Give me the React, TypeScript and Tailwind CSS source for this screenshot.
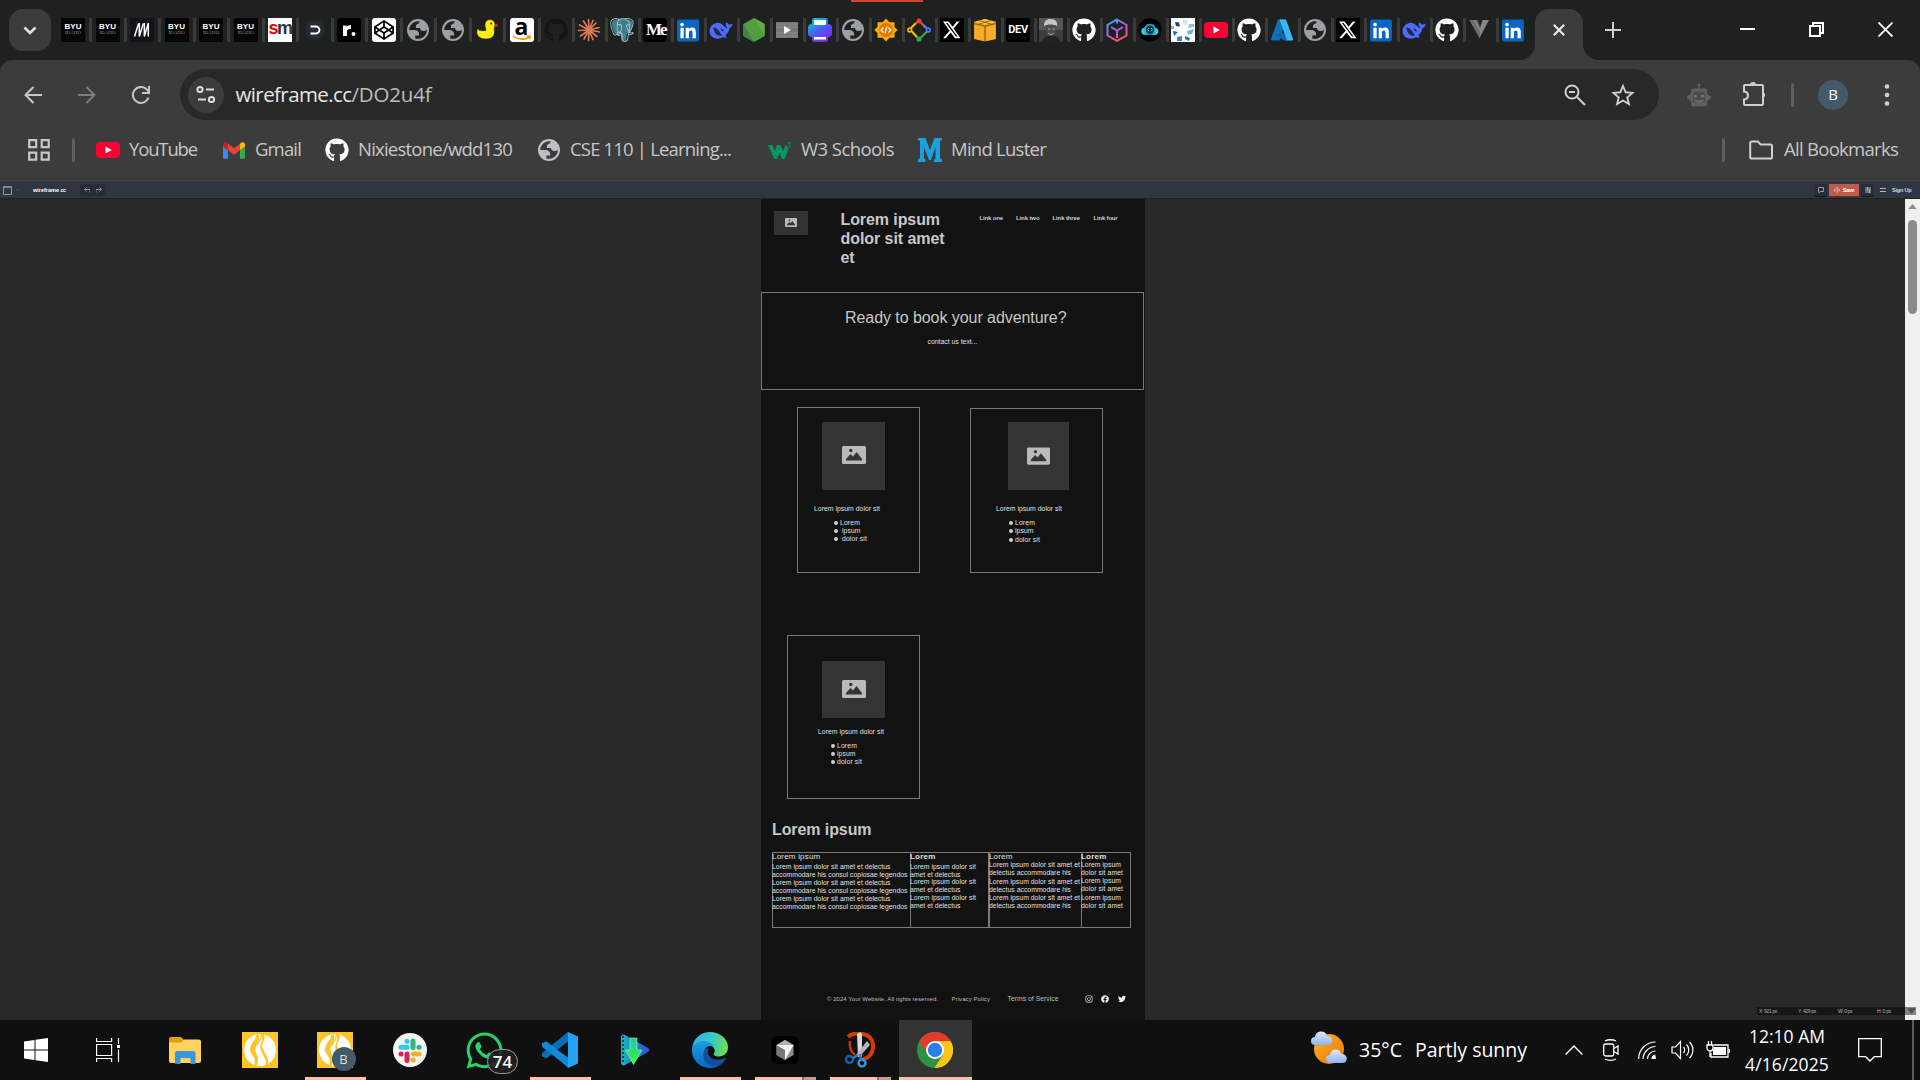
import React, { useLayoutEffect, useRef, useState } from "react";
import { FaGithub, FaLinkedin, FaCodepen, FaInstagram, FaFacebook, FaTwitter, FaWhatsapp } from "react-icons/fa";
import { SiPostgresql } from "react-icons/si";

const UI = "font-['Open_Sans','Noto_Sans',sans-serif]";

/** A single line of text whose tracking is adjusted so that it fills a given width. */
function Fit({ w, className = "", children }: { w: number; className?: string; children: string }) {
  const ref = useRef<HTMLSpanElement>(null);
  const [ls, setLs] = useState(0);
  useLayoutEffect(() => {
    const measure = () => {
      const el = ref.current;
      if (!el) return;
      el.style.letterSpacing = "0px";
      const natural = el.getBoundingClientRect().width;
      const v = (w - natural) / children.length;
      el.style.letterSpacing = v + "px";
      setLs(v);
    };
    measure();
    document.fonts?.ready.then(measure);
  }, [w, children]);
  return (
    <span className={"block shrink-0 whitespace-pre " + className} style={{ width: w }}>
      <span ref={ref} className="inline-block" style={{ letterSpacing: ls }}>{children}</span>
    </span>
  );
}

/* ---------- favicons ---------- */

const Byu = () => (
  <div className="flex size-6 flex-col items-center bg-[#060606] pt-[5px] font-['Liberation_Sans',sans-serif]">
    <span className="text-[8px] leading-[8px] font-bold text-white">BYU</span>
    <span className="font-['Liberation_Serif',serif] text-[5px] leading-[4px] text-[#888]">IDAHO</span>
  </div>
);
const Stripes = () => (
  <svg viewBox="0 0 24 24" className="size-6 bg-[#13121a]">
    <g stroke="#fff" strokeWidth="1.500" fill="none"><path d="M4.500 18.500 8.600 5.500" /><path d="M9.300 5v13.500L13.300 5.500" /><path d="M14.300 5v13.500L18.300 5v13.500" strokeWidth="1.500" /></g>
  </svg>
);
const Sm = () => (
  <div className="flex size-6 justify-center bg-white font-['Liberation_Sans',sans-serif] text-[18px] leading-[20px] font-bold tracking-[-1.500px]">
    <span className="text-[#f00000]">s</span><span className="text-[#333]">m</span>
  </div>
);
const Bracket = () => (
  <svg viewBox="0 0 24 24" className="size-6"><circle cx="12" cy="12" r="11" fill="#20262c" /><circle cx="12" cy="12" r="9" fill="#252c34" /><path d="M7.500 8.500h5.500a3.500 3.500 0 0 1 0 7H7.500" fill="none" stroke="#fff" strokeWidth="1.800" /></svg>
);
const Rdot = () => (
  <svg viewBox="0 0 24 24" className="size-6"><rect width="24" height="24" rx="3" fill="#000" /><path d="M6 7.500h3.500V9c1-1.500 2.500-2 4.500-1.700v3.700c-2.500-.3-4 .3-4 3V18H6z" fill="#fff" /><circle cx="16.500" cy="16" r="2" fill="#fff" /></svg>
);
const Codepen = () => <div className="flex size-6 items-center justify-center rounded-[3px] bg-white"><FaCodepen className="size-5 text-black" /></div>;
const Globe = ({ className = "size-6 text-[#9aa0a6]" }: { className?: string }) => (
  <svg viewBox="0 0 24 24" fill="currentColor" className={className}>
    <path fillRule="evenodd" d="M12 1a11 11 0 1 0 0 22 11 11 0 0 0 0-22zM3.200 12h4.900c3.700 0 5.400 1.900 5 5.600H9.300v2.800A8.800 8.800 0 0 0 20.800 11.500c-.7 1.100-1.800 1.600-3.300 1.600-2.300 0-3.500-1-3.500-3H9.900c-.3-3 .7-4.500 3.100-4.500 0-1 .3-1.700.9-2.100A8.800 8.800 0 0 0 3.200 12z" />
  </svg>
);
const Duck = () => (
  <svg viewBox="0 0 24 24" className="size-6"><path d="M2.500 10c1 3 4 3 8.500 2.500.3-1.500-1-2.500-1-5.500a5 5 0 0 1 10-.8c0 3-1.500 4-.6 6.300C20 17.500 17 21 11 21S2 18 1.800 14z" fill="#ffee0a" stroke="#1c1c00" strokeWidth=".5" /><path d="M19.500 6.500l3-1v3l-2.500.5z" fill="#e8231c" /><circle cx="16" cy="5.500" r=".9" fill="#222" /></svg>
);
const Amazon = () => (
  <div className="flex size-6 flex-col items-center rounded-[3px] bg-white">
    <span className="h-[17px] font-['Noto_Sans',sans-serif] text-[23px] leading-[16px] font-bold text-black">a</span>
    <svg viewBox="0 0 20 6" className="h-[6px] w-5"><path d="M1 1c5 4 12 4 16.500 1M14.500 1l3.500.300-.5 3" stroke="#f90" strokeWidth="1.600" fill="none" /></svg>
  </div>
);
const Gh = ({ className = "text-white" }: { className?: string }) => <FaGithub className={"size-6 " + className} />;
const Claude = () => (
  <svg viewBox="0 0 24 24" className="size-6">
    <g stroke="#d97757" strokeWidth="1.700" strokeLinecap="round"><path d="M12 12 11.500 1.500M12 12 16 2.500M12 12l7-7M12 12l10-2.500M12 12l10.500 2M12 12l8 6.500M12 12l4 9.500M12 12l-.5 10.500M12 12 7 21M12 12l-8.500 6M12 12 1.500 12.500M12 12 2.500 7M12 12 6.500 3" /></g>
  </svg>
);
const Postgres = () => (
  <div className="relative size-6">
    <svg viewBox="0 0 24 24" className="absolute inset-0 size-6"><path d="M2 6c0-4 3-5 6.500-4.500C12 .500 15 .500 17 1.500c4-.5 6 2 5.500 5-.5 4-2 6-3.500 8l-2 1-1 6c-1 2-4 2-4.500 0L11 16l-5 1C4 15 2 10 2 6z" fill="#3f7f8c" /></svg>
    <SiPostgresql className="absolute inset-0 size-6 text-[#bcd6d8]" />
  </div>
);
const Me = () => (
  <div className="size-6 rounded-[4px] bg-black pl-[3px] font-['Liberation_Serif',serif] text-[17px] leading-[24px] font-bold tracking-[-2px] text-white">Me</div>
);
const Li = () => <div className="flex size-6 items-center justify-center"><div className="flex size-[20px] items-center justify-center bg-white"><FaLinkedin className="h-[25px] w-[22px] shrink-0 text-[#0a66c2]" /></div></div>;
const Whale = () => (
  <svg viewBox="0 0 24 24" className="size-6" fill="#4d6bfe">
    <path d="M23.600 5.200c-.7 1.200-1.600 1.500-3.300 1.400-1-.1-1.300-.8-2-1.600-.7-.7-1.300-.5-1.500.5-.3 2.200 1 3 1.600 5-1.500-.5-2.600-1.700-4-3C12 5.300 10.300 4.500 7.300 5 3.700 5.700.5 9 .6 13.300c.2 4.500 3.500 7.500 8 7.400 2.200 0 3.800-.6 5.200-1.600 1.300.7 3 .7 4.200.2-.4-.8-1.100-1.300-1.600-1.900 2.500-2.300 3.700-4.300 4-7.300 2-.6 3.400-2.500 3.200-4.900z" />
    <path d="M4.500 9.500c2.700 0 4.600 2 6 4.300 1.200 2 1.800 2.800 3 3.500-4.200 1.300-6.500-.9-7.500-2.800C5 12.500 4.300 11.500 4.500 9.500z" fill="#1f2120" opacity=".85" />
    <path d="M11.500 10.500c1.800 0 3.300 1.500 3.500 3.200-1.700-.3-2.800-1.300-3.500-3.200z" fill="#1f2120" />
  </svg>
);
const NodeHex = () => (
  <svg viewBox="0 0 24 24" className="size-6"><path d="M12 0 22.700 6v12L12 24 1.300 18V6z" fill="#539e43" /><path d="M12 0 22.700 6v12z" fill="#6cc04a" opacity=".5" /><path d="M1.300 6 12 24l-10.700-6z" fill="#3e863d" /></svg>
);
const PlayBox = () => (
  <svg viewBox="0 0 24 24" className="size-6"><path d="M1 4h22v16H1z" fill="#777" /><path d="M1 6h22M1 9h22M1 15h22M1 18h22" stroke="#8d8d8d" /><path d="M9 8v8l7-4z" fill="#fff" /></svg>
);
const Printer = () => (
  <svg viewBox="0 0 24 24" className="size-6">
    <defs><linearGradient id="pr" gradientUnits="userSpaceOnUse" x1="4" y1="0" x2="20" y2="24"><stop stopColor="#00d8d0" /><stop offset=".5" stopColor="#4a5cf5" /><stop offset="1" stopColor="#8b1fe8" /></linearGradient></defs>
    <rect x="4" width="16" height="24" rx="3" fill="url(#pr)" /><rect y="6" width="24" height="13" rx="4" fill="url(#pr)" /><rect x="6" y="2" width="12" height="5" rx="1" fill="#fff" /><rect x="6" y="19" width="12" height="2.500" fill="#fff" />
  </svg>
);
const Gear = () => (
  <svg viewBox="0 0 24 24" className="size-6"><path d="M12 .5l3.500 3.700h5v4.800l3.200 3-3.200 3v4.800h-5L12 23.500l-3.500-3.700h-5V15L.3 12l3.200-3V4.200h5z" fill="#f9ab00" /><circle cx="12" cy="12" r="7" fill="#e37400" /><path d="M9.500 9.500 7 12l2.500 2.500M14.500 9.500 17 12l-2.500 2.500M13 8.500l-2 7" stroke="#fff" strokeWidth="1.200" fill="none" /></svg>
);
const Ring = () => (
  <svg viewBox="0 0 24 24" className="size-6" fill="none" strokeWidth="2.200">
    <path d="M9 5 4 10" stroke="#fbbc04" /><path d="m12.500 3 6 6.500" stroke="#ea4335" /><path d="m20 13.500-6 6" stroke="#34a853" /><path d="m10 19-5-5.500" stroke="#fbbc04" /><path d="m19.500 10-3-3" stroke="#4285f4" /><path d="m12 2.500-3 3" stroke="#ea4335" />
    <circle cx="12" cy="3" r="2.500" fill="#ea4335" stroke="none" /><circle cx="21.300" cy="12" r="1.900" stroke="#4285f4" strokeWidth="1.600" /><circle cx="12" cy="21" r="2.600" fill="#34a853" stroke="none" /><circle cx="2.800" cy="12" r="1.900" stroke="#fbbc04" strokeWidth="1.600" />
  </svg>
);
const XLogo = () => (
  <svg viewBox="0 0 24 24" className="size-6 bg-black"><path d="M16.900 3.500h2.600l-6 7 7 9.700h-5.500l-4.300-5.800-5 5.800H3.100l6.500-7.500L3 3.500h5.600l4 5.300zM16 18.600h1.500L7.600 5H6z" fill="#fff" /></svg>
);
const Aws = () => (
  <svg viewBox="0 0 24 24" className="size-6"><path d="M12 1 23 4v17l-11 2.500L1 21V4z" fill="#d9951b" /><path d="M1 4 12 1l11 3-11 3z" fill="#ffc233" /><path d="M1.500 6.500 10.800 9v14l-9.300-2.300z" fill="#f5ad2a" /><path d="M22.500 6.500 13.200 9v14l9.300-2.300z" fill="#f5ad2a" /><path d="M1 5.500 12 8l11-2.500M12 8v15M6 2.500l12 3.500M18 2.500 6 6" stroke="#7c5413" strokeWidth=".8" fill="none" /></svg>
);
const Dev = () => (
  <div className="size-6 rounded-[2px] bg-black text-center font-['Roboto',sans-serif] text-[11px] leading-6 font-bold tracking-tight text-white">DEV</div>
);
const Photo = () => (
  <svg viewBox="0 0 24 24" className="size-6 bg-[#555]"><path d="M0 12h24v12H0z" fill="#3d3d3d" /><path d="M3 24c1-5 4-6 9-6s9 1 9 6z" fill="#222" /><ellipse cx="12" cy="11" rx="5" ry="7" fill="#4c4c4c" /><path d="M5 8c-.5-5 3.500-7.500 7-7s7 2 6 7c-4-2-9-2-13 0z" fill="#c4c4c4" /><path d="M9 11h2M13.500 11h2M9.500 15.500c2 1 3.500 1 5 0" stroke="#ddd" strokeWidth=".8" /></svg>
);
const Cube = () => (
  <svg viewBox="0 0 24 24" className="size-6"><defs><linearGradient id="cb" x1=".2" y1="0" x2=".7" y2="1"><stop stopColor="#1fb6f0" /><stop offset=".55" stopColor="#c850e8" /><stop offset="1" stopColor="#ff5a4e" /></linearGradient></defs><path d="M12 1.500 21.500 7v10.500L12 22.800 2.500 17.500V7zM6 9l6 3.500L18 9M12 12.500V20M12 1.500v4" fill="none" stroke="url(#cb)" strokeWidth="2" /></svg>
);
const Cloud = () => (
  <svg viewBox="0 0 24 24" className="size-6"><defs><linearGradient id="cd"><stop stopColor="#37e0f5" /><stop offset=".5" stopColor="#0f8fb5" /><stop offset="1" stopColor="#37e0f5" /></linearGradient></defs><circle cx="12" cy="12" r="11.800" fill="#000" /><path d="M6.500 17a3.800 3.800 0 0 1 0-7.500 5.800 5.800 0 0 1 11 .3 3.700 3.700 0 0 1 0 7.200z" fill="url(#cd)" /><circle cx="12" cy="11.700" r="4.200" fill="#063640" /><path d="m11 10-1.500 1.700L11 13.400M13 10l1.500 1.700L13 13.400" stroke="#5be5ff" fill="none" strokeWidth=".9" /></svg>
);
const Flake = () => (
  <svg viewBox="0 0 24 24" className="size-6 bg-white">
    <path d="M4 4l4 .5 1 4L5 8z" fill="#11446c" /><path d="M12 1l5 1.500L15 8l-3-2z" fill="#cfe5f4" /><path d="M18 6h5v3l-6 1z" fill="#8fc2e2" /><path d="M16 13l7-2-2 5-4 .5z" fill="#6fb0d8" /><path d="M14 18l5 2-1 3-4-2z" fill="#1476b8" /><path d="M6 19l5-1v5H6z" fill="#3487bf" /><path d="M2 13l5 1-4 4z" fill="#1d6ca6" /><path d="M0 8h3v3H0z" fill="#7eb8dc" />
  </svg>
);
const Yt = () => (
  <svg viewBox="0 0 24 24" className="size-6 shrink-0"><rect y="4" width="24" height="16" rx="4" fill="#ff0033" /><path d="M9.500 8.500v7l6.300-3.500z" fill="#fff" /></svg>
);
const Azure = () => (
  <svg viewBox="0 0 24 24" className="size-6"><path d="M8 1.500h8L9.500 22.500H2.200C1.300 22.500.8 21.700 1 21z" fill="#1270b8" /><path d="M15.500 15H8l-2 2.500 8 5h3z" fill="#0a66b0" /><path d="M9.500 1.500H15a1.500 1.500 0 0 1 1.400 1L23 21c.2.800-.3 1.500-1.200 1.500h-6.500c.8 0 1.400-.7 1.200-1.500z" fill="#3ab5ee" /></svg>
);
const Vee = () => (
  <svg viewBox="0 0 24 24" className="size-6"><path d="M1.500 2h7L12 9.500 14.500 2H21l-9.500 18z" fill="#868686" /><path d="M1.500 2h4l6.500 12v6z" fill="#6d6d6d" /><path d="m8.500 2 3.500 7.500L10.500 2z" fill="#4a4a4a" /></svg>
);

const WIDE_TABS = [Byu, Byu, Stripes, Byu, Byu, Byu, Sm, Bracket, Rdot, Codepen, Globe, Globe, Duck, Amazon];
const DarkGh = () => <Gh className="text-[#151515]" />;
const TABS = [DarkGh, Claude, Postgres, Me, Li, Whale, NodeHex, PlayBox, Printer, Globe, Gear, Ring, XLogo, Aws, Dev, Photo, Gh, Cube, Cloud, Flake, Yt, Gh, Azure, Globe, XLogo, Li, Whale, Gh, Vee];

function TabStrip() {
  return (
    <div className="relative flex h-[60px] shrink-0 bg-[#1f2120]">
      <div className="absolute top-0 left-[851px] h-[2px] w-[72px] bg-[#d0472d]" />
      <div className="mt-[9px] ml-[9px] flex size-[42px] items-center justify-center rounded-[14px] bg-[#3b3b3b]">
        <svg viewBox="0 0 14 9" className="h-[9px] w-[14px]"><path d="m1.500 1.500 5.500 5.500 5.500-5.500" stroke="#e3e3e3" strokeWidth="2.500" fill="none" /></svg>
      </div>
      <div className="mt-[18px] ml-[10px] flex h-6 w-[483px]">
        {WIDE_TABS.map((I, i) => (
          <div key={i} className="flex w-[34.5px] shrink-0"><I /><div className="ml-1 h-6 w-[3px] bg-[#3b3b3b]" /></div>
        ))}
      </div>
      <div className="mt-[18px] flex h-6 w-[975px]">
        {TABS.map((I, i) => (
          <div key={i} className="flex w-[33px] shrink-0"><I /><div className="ml-1 h-6 w-[3px] bg-[#3b3b3b]" /></div>
        ))}
        <div className="w-6 shrink-0"><Li /></div>
      </div>
      <div className="mt-[9px] flex items-end">
        <svg viewBox="0 0 16 16" className="size-4"><path d="M0 16h16V0c0 9-7 16-16 16z" fill="#3c3c3c" /></svg>
        <div className="flex h-[51px] w-[48px] items-center justify-center rounded-t-[14px] bg-[#3c3c3c] pb-[9px]">
          <svg viewBox="0 0 12 12" className="size-3"><path d="m.8.800 10.400 10.400M11.200.800.800 11.200" stroke="#e8e8e8" strokeWidth="2.200" /></svg>
        </div>
        <svg viewBox="0 0 16 16" className="size-4"><path d="M16 16H0V0c0 9 7 16 16 16z" fill="#3c3c3c" /></svg>
      </div>
      <svg viewBox="0 0 16 16" className="mt-[22px] ml-[6px] size-4"><path d="M8 0v16M0 8h16" stroke="#d0d0d0" strokeWidth="2" /></svg>
      <div className="ml-auto flex pt-[22px] pr-[27px]">
        <svg viewBox="0 0 15 15" className="mr-[54px] size-[15px]"><path d="M0 7h15" stroke="#fff" strokeWidth="2" /></svg>
        <svg viewBox="0 0 15 15" className="mr-[54px] size-[15px]"><path d="M1 4h10v10H1zM4 4V1h10v10h-3" stroke="#fff" strokeWidth="2" fill="none" /></svg>
        <svg viewBox="0 0 15 15" className="size-[15px]"><path d="m.5.500 14 14M14.500.500l-14 14" stroke="#fff" strokeWidth="1.800" /></svg>
      </div>
    </div>
  );
}

function Toolbar() {
  return (
    <div className="flex h-[69px] shrink-0 rounded-t-[12px] bg-[#3c3c3c] pt-[9px]">
      <div className="flex h-[51px] w-full items-center">
        <svg viewBox="0 0 18 18" className="ml-6 size-[18px]"><path d="M18 9H2M9.500 1 1.500 9l8 8" stroke="#c7c7c7" strokeWidth="2" fill="none" /></svg>
        <svg viewBox="0 0 18 18" className="ml-9 size-[18px]"><path d="M0 9h16M8.500 1l8 8-8 8" stroke="#7d7d7d" strokeWidth="2" fill="none" /></svg>
        <svg viewBox="0 0 18 18" className="ml-9 size-[18px]"><path d="M16.500 11.500A8 8 0 1 1 15 3.700L17 6" stroke="#c7c7c7" strokeWidth="2" fill="none" /><path d="M17 0v7h-7" stroke="#c7c7c7" strokeWidth="2" fill="none" /></svg>
        <div className="ml-[30px] flex h-[51px] w-[1479px] items-center rounded-full bg-[#282828]">
          <div className="ml-[7.500px] flex size-9 items-center justify-center rounded-full bg-[#3c3c3c]">
            <svg viewBox="0 0 20 20" className="size-[20px]" stroke="#dedede" fill="none" strokeWidth="2"><circle cx="4" cy="4.500" r="2.600" /><path d="M10 4.500h8M2 14.500h8" /><circle cx="15.500" cy="14.500" r="2.600" /></svg>
          </div>
          <div className={"ml-3 flex h-[51px] text-[20.500px] leading-[50px] " + UI}>
            <Fit w={116} className="text-[#e6e6e6]">wireframe.cc</Fit>
            <Fit w={80} className="text-[#bdbdbd]">/DO2u4f</Fit>
          </div>
          <svg viewBox="0 0 22 22" className="mr-[25px] ml-auto size-[22px]" stroke="#cfcfcf" fill="none" strokeWidth="2"><circle cx="8" cy="8" r="6.500" /><path d="m13 13 8 8M5 8h6" /></svg>
          <svg viewBox="0 0 24 24" className="mr-6 size-[24px]"><path d="m12 3 2.700 6.300 6.800.6-5.200 4.500 1.600 6.700L12 17.500l-5.900 3.600 1.600-6.700-5.200-4.500 6.800-.6z" stroke="#cfcfcf" strokeWidth="1.900" fill="none" /></svg>
        </div>
        <svg viewBox="0 0 24 24" className="ml-[28px] size-6" fill="#5f5f5f"><path d="M11.200 2h1.600v4h-1.600z" /><circle cx="12" cy="2" r="1.500" /><rect x="4" y="5.500" width="16" height="18" rx="2.500" /><ellipse cx="12" cy="14.500" rx="12" ry="4.500" /><path d="M6 12c0-3 2-3.500 6-3.500s6 .5 6 3.500v7H6z" fill="#4c4c4c" /><circle cx="8.500" cy="13" r="1.500" fill="#777" /><circle cx="15.500" cy="13" r="1.500" fill="#777" /><path d="M7.500 17c3 2 6 2 9 0" stroke="#777" fill="none" strokeWidth="1.500" /></svg>
        <svg viewBox="0 0 25 25" className="mb-[3px] ml-[31px] size-[25px]"><path d="M3 4h17a1 1 0 0 1 1 1v18a1 1 0 0 1-1 1H3a1 1 0 0 1-1-1v-4.500c2.500-.3 4-1.800 4-4s-1.500-3.700-4-4V5a1 1 0 0 1 1-1z" stroke="#cfcfcf" strokeWidth="2" fill="none" /><path d="M8 4a3 3 0 0 1 6 0zM21 11a3.200 3.200 0 0 1 0 6z" fill="#cfcfcf" /></svg>
        <div className="ml-6 h-6 w-[3px] rounded bg-[#5f5f5f]" />
        <div className={"ml-6 flex size-[30px] items-center justify-center rounded-full bg-[#455a68] text-[15px] text-white " + UI}>B</div>
        <svg viewBox="0 0 6 22" className="ml-9 h-[22px] w-[6px]" fill="#cfcfcf"><circle cx="3" cy="2.500" r="2.300" /><circle cx="3" cy="11" r="2.300" /><circle cx="3" cy="19.500" r="2.300" /></svg>
      </div>
    </div>
  );
}

function Bookmarks() {
  return (
    <div className={"flex h-[51px] shrink-0 items-center bg-[#3c3c3c] pb-[9px] text-[18.500px] leading-[40px] text-[#c7c7c7] [&>span]:mb-0.5 " + UI}>
      <svg viewBox="0 0 22 22" className="ml-7 size-[22px]" stroke="#c7c7c7" strokeWidth="2.200" fill="none"><path d="M1.200 1.200h7v7h-7zM13.700 1.200h7v7h-7zM1.200 13.700h7v7h-7zM13.700 13.700h7v7h-7z" /></svg>
      <div className="mr-[21px] ml-[22px] h-6 w-[3px] rounded bg-[#5f5f5f]" />
      <Yt /><Fit w={68} className="ml-[9px]">YouTube</Fit>
      <svg viewBox="52 42 88 66" className="ml-[26px] h-[17px] w-[22px]">
        <path fill="#4285f4" d="M58 108h14V74L52 59v43c0 3.320 2.690 6 6 6" /><path fill="#34a853" d="M120 108h14c3.320 0 6-2.690 6-6V59l-20 15" /><path fill="#fbbc04" d="M120 48v26l20-15v-8c0-7.420-8.470-11.650-14.400-7.200" /><path fill="#ea4335" d="M72 74V48l24 18 24-18v26L96 92" /><path fill="#c5221f" d="M52 51v8l20 15V48l-5.600-4.200c-5.940-4.450-14.400-.220-14.400 7.200" />
      </svg>
      <Fit w={46} className="ml-[10px]">Gmail</Fit>
      <Gh className="ml-[24px] text-white" />
      <Fit w={154} className="ml-[9px]">Nixiestone/wdd130</Fit>
      <Globe className="ml-[25px] size-6 text-[#bdc1c6]" />
      <Fit w={161} className="ml-[9px]">CSE 110 | Learning...</Fit>
      <svg viewBox="0 0 24 24" className="ml-[37px] size-6"><path d="M0 7h4.500l2.500 6 2-6h3.500l2.500 6 2.500-6h.5l2.500 4-4 10h-2.500L11.500 15 9 21H6.500z" fill="#059862" /><path d="M19.500 4.800h3.200l-1.700 2c1.600 0 2 1 1.500 1.900-.5.800-2 .9-3 .2" stroke="#059862" fill="none" /></svg>
      <Fit w={93} className="ml-[9px]">W3 Schools</Fit>
      <svg viewBox="0 0 24 24" className="ml-6 size-6"><path d="M0 0h7.500L12 12l4.500-12H24v2l-2 1v17l2 1.500V24h-8v-2.500l1.500-1V9L13 22h-2L6 9v11.500l1.500 1V24H0v-2.500L2 20V3L0 2z" fill="#1ba0e0" /></svg>
      <Fit w={95} className="ml-[9px]">Mind Luster</Fit>
      <div className="ml-auto h-6 w-[3px] rounded bg-[#5f5f5f]" />
      <svg viewBox="0 0 24 20" className="ml-6 h-5 w-6"><path d="M1.200 3a1.600 1.600 0 0 1 1.600-1.600h6L11.500 4.500h10A1.500 1.500 0 0 1 23 6v11a1.600 1.600 0 0 1-1.600 1.600H2.800A1.600 1.600 0 0 1 1.200 17z" fill="none" stroke="#d0d0d0" strokeWidth="2" /></svg>
      <Fit w={114} className="mr-[22px] ml-[11px]">All Bookmarks</Fit>
    </div>
  );
}

function EditorBar() {
  return (
    <div className="flex h-[19px] shrink-0 items-center border-t border-b border-t-[#484848] border-b-[#222225] bg-[#2f3542] pt-px font-['Liberation_Sans',sans-serif] text-[5.500px] leading-[12px] font-bold">
      <svg viewBox="0 0 9 9" className="ml-[3px] size-[9px]"><path d="M.5 1h8v7.500h-8z" fill="none" stroke="#8f949d" /><path d="M0 1h9" stroke="#a5a8ae" /></svg>
      <svg viewBox="0 0 4 3" className="ml-1 h-[3px] w-1"><path d="m0 0 2 2 2-2" stroke="#454b56" fill="none" /></svg>
      <div className="ml-[13px] flex text-white"><Fit w={26}>wireframe</Fit><span className="w-[1.500px] text-[#e04a3a]">.</span><Fit w={5}>cc</Fit></div>
      <div className="ml-[14.500px] flex h-3 w-[26px] items-center justify-center gap-[6px] rounded-[2px] bg-[#282c37]">
        <svg viewBox="0 0 6 6" className="size-[6px]"><path d="M6 5.500V2.500H1M2.500.500.500 2.500l2 2" stroke="#aaa" strokeWidth=".8" fill="none" /></svg>
        <svg viewBox="0 0 6 6" className="size-[6px]"><path d="M0 5.500V2.500h5M3.500.500l2 2-2 2" stroke="#aaa" strokeWidth=".8" fill="none" /></svg>
      </div>
      <div className="ml-auto flex h-[13px] w-[13px] items-center justify-center rounded-[2px] border-b border-[#15171c] bg-[#282c37]">
        <svg viewBox="0 0 6 6" className="size-[6px]"><path d="M.5.500h5v4H2.500L1 5.800V4.500H.5z" stroke="#b5b5b5" strokeWidth=".8" fill="none" /></svg>
      </div>
      <div className="ml-[2px] flex h-[13px] w-[30px] items-center justify-center gap-[3px] rounded-[1px] border-b border-[#5e2d27] bg-[#c25a4b] text-white">
        <svg viewBox="0 0 6 6" className="size-[6px]"><path d="M1 4.500C-.5 2.500 1.500.500 3 .800s3 1.500 2 3.700M3 5.800V2.500M2 3.500l1-1 1 1" stroke="#f3d4cf" strokeWidth=".7" fill="none" /></svg>
        <Fit w={11.500}>Save</Fit>
      </div>
      <div className="ml-[2px] flex h-[13px] w-[13px] items-center justify-center rounded-[2px] border-b border-[#15171c] bg-[#282c37]">
        <svg viewBox="0 0 6 6" className="size-[6px]"><path d="M0 1h6M0 3h6M0 5h6" stroke="#b5b5b5" /><path d="M2.500 0v4M4.500 2v4" stroke="#b5b5b5" strokeWidth=".8" /></svg>
      </div>
      <svg viewBox="0 0 6 6" className="ml-[6px] h-[6px] w-[6px]"><path d="M0 1.500h6M0 4.500h6" stroke="#c7c7c7" strokeWidth=".9" /></svg>
      <Fit w={19.500} className="mr-[8.500px] ml-[6px] text-[#d8d8d8]">Sign Up</Fit>
    </div>
  );
}

/* ---------- wireframe page ---------- */

const Picture = ({ className }: { className: string }) => (
  <svg viewBox="0 0 24 18" className={"shrink-0 " + className}><rect width="24" height="18" rx="1.500" fill="#bababa" /><circle cx="8.800" cy="4.500" r="1.700" fill="#353535" /><path d="M4 14.500V13l4.500-5 2.500 2.500L14.500 6l5.500 7v1.500z" fill="#353535" /></svg>
);

type Item = { t: string; w: number; dx?: number };

function List({ items, className }: { items: Item[]; className: string }) {
  return (
    <ul className={"flex flex-col " + className}>
      {items.map((it) => (
        <li key={it.t} className="flex h-2 items-center">
          <span className="size-[3.500px] rounded-full bg-[#cfcfcf]" />
          <Fit w={it.w} className={it.dx ? "ml-[4.500px]" : "ml-[2.500px]"}>{it.t}</Fit>
        </li>
      ))}
    </ul>
  );
}

function Lines({ rows, className = "" }: { rows: [string, number][]; className?: string }) {
  return <div className={"flex flex-col leading-[8px] " + className}>{rows.map(([t, w], i) => <Fit key={i} w={w}>{t}</Fit>)}</div>;
}

const C1: [string, number][] = [["Lorem ipsum dolor sit amet et delectus", 118.5], ["accommodare his consul copiosae legendos", 135.5]];
const C2: [string, number][] = [["Lorem ipsum dolor sit", 66], ["amet et delectus", 50.5]];
const C3: [string, number][] = [["Lorem ipsum dolor sit amet et", 91], ["delectus accommodare his", 82]];
const C4: [string, number][] = [["Lorem ipsum", 40], ["dolor sit amet", 42]];

function WirePage() {
  return (
    <div className="flex h-[821px] w-[384px] shrink-0 flex-col overflow-hidden bg-[#121212] font-['Liberation_Sans',sans-serif] text-[6.800px] leading-[8px] text-[#e0e0e0]">
      <header className="flex h-[93px] shrink-0">
        <div className="mt-3 ml-[13px] flex h-6 w-[34px] items-center justify-center bg-[#333] pr-px pb-px"><Picture className="h-[9px] w-3" /></div>
        <h1 className="mt-[11px] ml-[32.500px] w-[106px] text-[16px] leading-[19px] font-bold text-[#c8c8c8]">
          <Fit w={99.5}>Lorem ipsum</Fit><Fit w={104}>dolor sit amet</Fit><Fit w={14}>et</Fit>
        </h1>
        <nav className="mt-[15px] ml-[33px] flex text-[6px] font-bold text-[#cfcfcf]">
          <Fit w={23.5} className="mr-[13px]">Link one</Fit><Fit w={23.5} className="mr-[13px]">Link two</Fit><Fit w={27.500} className="mr-[13.500px]">Link three</Fit><Fit w={24}>Link four</Fit>
        </nav>
      </header>
      <section className="flex h-[98px] w-[383px] shrink-0 flex-col border border-[#7a7a7a]">
        <Fit w={221.5} className="mt-[15px] ml-[83px] text-[16px] leading-[19px] text-[#c8c8c8]">Ready to book your adventure?</Fit>
        <Fit w={50} className="mt-[11px] ml-[165.500px]">contact us text...</Fit>
      </section>
      <div className="flex h-[245px] shrink-0">
        <section className="mt-[17px] ml-9 flex h-[166px] w-[123px] flex-col border border-[#7a7a7a]">
          <div className="mt-[14px] ml-6 flex h-[68px] w-[63px] items-center justify-center bg-[#353535] pb-[2px]"><Picture className="h-[18px] w-6" /></div>
          <Fit w={66} className="mt-[15px] ml-4">Lorem ipsum dolor sit</Fit>
          <List className="mt-[6px] ml-9" items={[{ t: "Lorem", w: 20 }, { t: "ipsum", w: 18.5, dx: 1 }, { t: "dolor sit", w: 25, dx: 1 }]} />
        </section>
        <section className="mt-[18px] ml-[50px] flex h-[165px] w-[133px] flex-col border border-[#7a7a7a]">
          <div className="mt-[13px] ml-[37px] flex h-[68px] w-[61px] items-center justify-center bg-[#353535]"><Picture className="h-[18px] w-[23px]" /></div>
          <Fit w={66} className="mt-[15px] ml-[25px]">Lorem ipsum dolor sit</Fit>
          <List className="mt-[6px] ml-[38px] [&>li:last-child]:mt-px" items={[{ t: "Lorem", w: 20 }, { t: "ipsum", w: 18.5 }, { t: "dolor sit", w: 25 }]} />
        </section>
      </div>
      <section className="ml-[26px] flex h-[164px] w-[133px] shrink-0 flex-col border border-[#7a7a7a]">
        <div className="mt-[25px] ml-[34px] flex h-[57px] w-[63px] items-center justify-center bg-[#353535] pb-px"><Picture className="h-[18px] w-6" /></div>
        <Fit w={66} className="mt-[10px] ml-[30px]">Lorem ipsum dolor sit</Fit>
        <List className="mt-[6px] ml-[43px]" items={[{ t: "Lorem", w: 20 }, { t: "ipsum", w: 18.5 }, { t: "dolor sit", w: 25 }]} />
      </section>
      <Fit w={99.500} className="mt-[21px] ml-[11px] text-[16px] leading-[19px] font-bold text-[#c8c8c8]">Lorem ipsum</Fit>
      <div className="mt-[13px] ml-[11px] flex h-[76px] w-[359px] shrink-0 border border-[#7a7a7a] [&>div>*]:-ml-px">
        <div className="w-[137px]">
          <Fit w={48.500} className="-mt-px text-[8px] leading-[10px]">Lorem ipsum</Fit>
          <Lines className="mt-[1px]" rows={[...C1, ...C1, ...C1]} />
        </div>
        <div className="w-[78px] border-l border-[#7a7a7a]">
          <Fit w={25.500} className="-mt-px text-[8px] leading-[10px] font-bold">Lorem</Fit>
          <Lines className="mt-[1px]" rows={C2} /><Lines className="-mt-[1px]" rows={[...C2, ...C2]} />
        </div>
        <div className="w-[93px] border-l-2 border-[#7a7a7a]">
          <Fit w={23.500} className="-mt-px text-[8px] leading-[10px]">Lorem</Fit>
          <Lines className="-mt-[1px]" rows={C3} /><Lines className="mt-[1px]" rows={[...C3, ...C3]} />
        </div>
        <div className="flex-1 border-l border-[#7a7a7a]">
          <Fit w={25.500} className="-mt-px text-[8px] leading-[10px] font-bold">Lorem</Fit>
          <Lines className="-mt-[1px]" rows={[...C4, ...C4]} /><Lines className="mt-[1px]" rows={C4} />
        </div>
      </div>
      <footer className="mt-[66px] flex h-[9px] shrink-0 items-center text-[#bdbdbd]">
        <Fit w={111} className="ml-[66px] text-[6px]">© 2024 Your Website. All rights reserved.</Fit>
        <Fit w={38.500} className="ml-[13.500px] text-[6px]">Privacy Policy</Fit>
        <Fit w={51} className="ml-[17.500px]">Terms of Service</Fit>
        <div className="ml-[26px] flex items-center gap-[8.500px] text-[#f0f0f0]">
          <FaInstagram className="size-2" /><FaFacebook className="size-2" /><FaTwitter className="size-2" />
        </div>
      </footer>
    </div>
  );
}

function Canvas() {
  return (
    <main className="relative flex h-[821px] shrink-0 justify-end bg-[#282828]">
      <WirePage />
      <div className="w-[760px]" />
      <div className="flex w-[15px] flex-col items-center bg-[#f0f0f0]">
        <svg viewBox="0 0 10 6" className="mt-[5px] h-[5px] w-[9px]"><path d="M0 6 5 0l5 6z" fill="#8a8a8a" /></svg>
        <div className="mt-[11px] h-[94px] w-[9px] rounded-full bg-[#8b8b8b]" />
      </div>
      <div className="absolute top-[808px] right-1 flex h-2 w-[159px] items-center bg-black/45 pl-[2px] font-['Liberation_Sans',sans-serif] text-[5px] leading-[8px] text-[#b5b5b5]">
        <Fit w={18} className="mr-[21px]">X: 921 px</Fit><Fit w={18} className="mr-[22px]">Y: 429 px</Fit><Fit w={14} className="mr-[25px]">W: 0 px</Fit><Fit w={14}>H: 0 px</Fit>
        <svg viewBox="0 0 10 6" className="ml-auto h-[6px] w-[9px]"><path d="M0 0h10L5 6z" fill="#4e4e4e" /></svg>
      </div>
    </main>
  );
}

/* ---------- taskbar ---------- */

const Folder = () => (
  <svg viewBox="0 0 32 27" className="h-[27px] w-8"><path d="M0 2a2 2 0 0 1 2-2h10l3 3v4H0z" fill="#e5a000" /><path d="M0 5.500h12L15 2.500h15a2 2 0 0 1 2 2V24a2 2 0 0 1-2 2H2a2 2 0 0 1-2-2z" fill="#ffd35e" /><path d="M6 27V16a2 2 0 0 1 2-2h16.500a2 2 0 0 1 2 2v11h-5v-6h-10v6z" fill="#3a96dd" /></svg>
);
const Path = () => (
  <svg viewBox="0 0 36 36" className="size-9 bg-[#ffc425]">
    <circle cx="18" cy="18" r="16" fill="#fff" />
    <path d="M14 3c1 5-9 10-5 18 3 5 5 6 3 13l2 1c2-5 3-8 1-12-3-6-1-9 1-13 2-3 1-5 .5-8z" fill="#ffc425" />
    <path d="M22 2c3 5-4 9-1 15 2 5 6 8 5 16l-2 2c1-7-3-12-5-16-2-5 1-9 1-12 0-2 0-3-.5-5z" fill="#ffc425" />
    <path d="M19 1c2 5-3 8-4 13" stroke="#ffc425" fill="none" strokeWidth="1.200" />
    <path d="M2 27c3 4 7 7 12 8H2zM34 27c-3 4-6 6-9 7v2h9z" fill="#ffc425" />
  </svg>
);
const Slack = () => (
  <svg viewBox="0 0 34 34" className="size-[34px]"><circle cx="17" cy="17" r="17" fill="#f4f4f4" /><g strokeWidth="5" strokeLinecap="round"><path d="M20 8v6.500" stroke="#2eb67d" /><path d="M26 14.200h.1" stroke="#2eb67d" /><path d="M8 14.200h6" stroke="#36c5f0" /><path d="M14 8.200v.1" stroke="#36c5f0" /><path d="M14 21v6.500" stroke="#e01e5a" /><path d="M8 21h.1" stroke="#e01e5a" /><path d="M20.500 21H26" stroke="#ecb22e" /><path d="M20.200 27h.1" stroke="#ecb22e" /></g></svg>
);
const Code = () => (
  <svg viewBox="0 0 36 36" className="size-9"><path d="M26 0 10.500 15 4.500 9.500 0 11.500v3L26 35z" fill="#0d7fc9" /><path d="M26 36 10.500 21.500l-6 5L0 24.500V21L26 0z" fill="#0a6fb5" /><path d="M0 11.500 4.500 9.500 26 26v9L0 14.500z" fill="#1289d6" /><path d="M26 9.500v16L15.500 17.800z" fill="#101010" /><path d="m26 0 10 4.500v27L26 36z" fill="#24a3f2" /></svg>
);
const Downloader = () => (
  <svg viewBox="0 0 30 32" className="h-8 w-[30px]"><defs><linearGradient id="dl" x1="0" y1="0" x2="0" y2="1"><stop stopColor="#18c8b0" /><stop offset="1" stopColor="#3dfa28" /></linearGradient><linearGradient id="dp"><stop stopColor="#1bb7c0" /><stop offset="1" stopColor="#2a4fd8" /></linearGradient></defs><path d="M1 3c0-2 2-3 4-2l23 13c2 1 2 3 0 4L5 31c-2 1-4 0-4-2z" fill="url(#dp)" /><path d="M3 2v28" stroke="#0c3f55" strokeWidth="2" strokeDasharray="2 2" /><path d="M10 4h7v12h5l-8.500 14.500L5.500 16H10z" fill="url(#dl)" stroke="#c9ffe0" strokeWidth=".5" /></svg>
);
const Edge = () => (
  <svg viewBox="0 0 36 36" className="size-9">
    <defs><linearGradient id="e1" x1="0" y1=".3" x2="1" y2=".5"><stop stopColor="#2fb4ee" /><stop offset=".5" stopColor="#36c6c9" /><stop offset="1" stopColor="#6be04e" /></linearGradient><linearGradient id="e2" x1="0" y1="0" x2="0" y2="1"><stop stopColor="#1aa0e0" /><stop offset="1" stopColor="#0a68c4" /></linearGradient></defs>
    <path d="M0 17C1 6 9 0 18 0c10 0 18 7 18 15 0 6-4 9.500-9 9.500-4 0-6-1.500-5-3 2-3 0-7-4-8z" fill="url(#e1)" />
    <path d="M0 17C1 11 7 9 12 9c6 0 11 4 10.500 9.500C22 15 20 14 18 14c-5 0-7 6-4 11 3 6 9 8 16 6-4 4-8 5-12 5C8 36-1 28 0 17z" fill="url(#e2)" />
    <path d="M13 17c-5 9 1 18 12 17 4-1 7-4 9-7 .5-.8-.3-1-1-.7-7 3-16 1-17-5.300-.3-2 .3-3.500 1-4.500-1.500 0-3 0-4 .5z" fill="#134f9c" />
  </svg>
);
const CursorApp = () => (
  <svg viewBox="0 0 28 28" className="size-7"><rect width="28" height="28" rx="6" fill="#000" /><path d="m14 4 8.500 5v10L14 24l-8.500-5V9z" fill="#8f8f8f" /><path d="m14 4 8.500 5H5.500z" fill="#b0b0b0" /><path d="M5.500 9 14 14v10l-8.500-5z" fill="#777" /><path d="M22.500 9 14 24V14L5.500 9z" fill="#f4f4f4" /></svg>
);
const Snip = () => (
  <svg viewBox="0 0 30 36" className="h-9 w-[30px]"><path d="M3 5C8 0 26-1 28 12c1 10-4 14-11 16" stroke="#d83b01" strokeWidth="4" fill="none" /><path d="M5 9c-1 6 1 11 5 14" stroke="#c33a08" strokeWidth="2.500" fill="none" /><path d="m12 2 3-2 2 2v23h-4z" fill="#d9d9d9" /><path d="M22 9l3 4-11 12-3-2z" fill="#b5b5b5" /><circle cx="4.500" cy="27.500" r="3.500" stroke="#0f62b0" strokeWidth="2.500" fill="none" /><circle cx="17" cy="31" r="3.500" stroke="#2b9ae8" strokeWidth="2.500" fill="none" /><path d="m8 26 5-3M15.500 28V22" stroke="#1c7fd0" strokeWidth="2.500" /></svg>
);
const Chrome = () => (
  <svg viewBox="0 0 36 36" className="size-9"><circle cx="18" cy="18" r="18" fill="#2a9444" /><path d="M18 9H33.600A18 18 0 0 1 17.500 36L26 22.500z" fill="#fdc518" /><path d="M2.400 9A18 18 0 0 1 33.600 9H18a9 9 0 0 0-7.800 4.500L10 22z" fill="#e53b2e" /><circle cx="18" cy="18" r="9" fill="#fff" /><circle cx="18" cy="18" r="7.200" fill="#2b7de9" /></svg>
);
const PathB = () => (
  <div className="relative"><Path /><div className={"absolute -right-[3px] -bottom-[3px] flex size-6 items-center justify-center rounded-full bg-[#455a68] text-[13px] leading-none text-[#ddd] " + UI}>B</div></div>
);
const Whats = () => (
  <div className="relative"><FaWhatsapp className="size-[41px] text-[#25d366]" /><div className={"absolute -right-[13px] -bottom-[3px] flex h-[25px] w-[31px] items-center justify-center rounded-full border border-[#999] bg-[#202020]/90 text-[17px] leading-none font-semibold text-white " + UI}>74</div></div>
);

type TaskApp = { I: React.FC; line?: "one" | "stack" | "active" };
const APPS: TaskApp[] = [
  { I: Folder }, { I: Path }, { I: PathB, line: "one" }, { I: Slack }, { I: Whats }, { I: Code, line: "one" }, { I: Downloader },
  { I: Edge, line: "one" }, { I: CursorApp, line: "stack" }, { I: Snip, line: "stack" }, { I: Chrome, line: "active" },
];

function Taskbar() {
  return (
    <div className={"flex h-[60px] shrink-0 bg-[#101010] text-white " + UI}>
      <div className="flex w-[72px] items-center justify-center"><svg viewBox="0 0 24 24" className="size-6" fill="#fff"><path d="M0 3.400 10.500 2v9.500H0zM11.500 1.800 24 0v11.500H11.500zM0 12.500h10.500V22L0 20.600zM11.500 12.500H24V24l-12.500-1.800z" /></svg></div>
      <div className="flex w-[72px] items-center justify-center"><svg viewBox="0 0 24 24" className="size-6" fill="none" stroke="#fff" strokeWidth="1.200"><path d="M.6 0v3.500h15V0M.6 6.500h15v11H.6zM.6 24v-3.500h15V24M22.500 0v6M22.500 11.500V24" /><path d="M21 7h3v3h-3z" fill="#fff" stroke="none" /></svg></div>
      <div className="ml-[5px] flex gap-[2px]">
        {APPS.map(({ I, line }, i) => (
          <div key={i} className={"flex h-[60px] w-[73px] flex-col " + (line === "active" ? "bg-[#333]" : "")}>
            <div className="flex h-[57px] items-center justify-center pt-[3px] pr-[2px]"><I /></div>
            {line === "active" && <div className="h-[3px] bg-[#fdbfae]" />}
            {line === "one" && <div className="mx-[6px] h-[3px] bg-[#fdbfae]" />}
            {line === "stack" && <div className="mx-[6px] flex h-[3px]"><div className="w-[47px] bg-[#fdbfae]" /><div className="w-[2px] bg-[#8a6a62]" /><div className="w-3 bg-[#c9998c]" /></div>}
          </div>
        ))}
      </div>
      <div className="ml-auto flex items-center">
        <svg viewBox="0 0 36 34" className="-mt-1 h-[34px] w-9">
          <defs><linearGradient id="sun" x1="0" y1="0" x2="1" y2="1"><stop stopColor="#f8b31c" /><stop offset="1" stopColor="#f07410" /></linearGradient><linearGradient id="cl" x1="0" y1="0" x2="0" y2="1"><stop stopColor="#dce9fb" /><stop offset="1" stopColor="#8fb3ee" /></linearGradient></defs>
          <circle cx="18" cy="18" r="15" fill="url(#sun)" />
          <path d="M4 14a4 4 0 0 1 0-8c1-7 11-7 12-1 7-1 7 9 1 9z" fill="url(#cl)" />
          <path d="M19 32a4 4 0 0 1 0-8c1-7 10-7 11-1 7-1 8 9 1 9z" fill="url(#cl)" />
        </svg>
        <Fit w={43} className="ml-[12px] text-[19.500px] leading-[60px]">35°C</Fit>
        <Fit w={112} className="ml-[13px] text-[19.500px] leading-[60px]">Partly sunny</Fit>
        <svg viewBox="0 0 18 10" className="ml-[38px] h-[10px] w-[18px]"><path d="m.6 9.400 8.400-8.400 8.400 8.400" stroke="#fff" strokeWidth="1.400" fill="none" /></svg>
        <svg viewBox="0 0 16 22" className="ml-5 h-[22px] w-4" fill="none" stroke="#fff" strokeWidth="1.300"><rect x=".7" y="5" width="10" height="12" rx="2" /><path d="m11 9.500 4-2.500v8l-4-2.500M2 2C5 .300 10 .300 13 2M2 20c3 1.700 8 1.700 11 0" /></svg>
        <svg viewBox="0 0 18 18" className="ml-[19px] size-[18px]" fill="none" stroke="#fff" strokeWidth="1.200"><path d="M.6 18A17 17 0 0 1 17.500 1M5 18A13 13 0 0 1 17.500 5.500M9.500 18a8 8 0 0 1 8-8" /><path d="M14 18a4 4 0 0 1 3.500-4" /><circle cx="16" cy="16.500" r="1.300" fill="#fff" /></svg>
        <svg viewBox="0 0 23 20" className="ml-[15px] h-5 w-[23px]" fill="none" stroke="#fff" strokeWidth="1.200"><path d="M1 7h3.500L9.500 1.500v17L4.500 13H1z" /><path d="M12.500 7c1.500 1.500 1.500 4.500 0 6M15.500 4.500c3 3 3 8 0 11M18.500 2c4.500 4.500 4.500 11.500 0 16" /></svg>
        <svg viewBox="0 0 24 18" className="ml-[12px] h-[18px] w-6" fill="none" stroke="#fff" strokeWidth="1.300"><path d="M8 4h14v12H5v-4" /><path d="M8 6h12v8H7V9z" fill="#fff" stroke="none" /><path d="M23.200 8v4M1 4h6v3a3 3 0 0 1-6 0zM2.500 4V0M5.500 4V0M4 10v6" /></svg>
        <div className="mr-px ml-[15px] flex h-[60px] w-[84px] flex-col items-center pt-[2px] text-[17.500px] leading-[28px]"><Fit w={76}>12:10 AM</Fit><Fit w={84}>4/16/2025</Fit></div>
        <svg viewBox="0 0 24 24" className="ml-[28px] h-6 w-6"><path d="M.7.700h22.600v18h-7L12 23l-4.300-4.300h-7z" stroke="#fff" strokeWidth="1.300" fill="none" /></svg>
        <div className="mr-[6px] ml-[30px] h-[60px] w-[2px] bg-[#5a5a5a]" />
      </div>
    </div>
  );
}

export default function App() {
  return (
    <div className="flex h-[1080px] w-[1920px] flex-col overflow-hidden bg-[#1f2120]">
      <TabStrip />
      <Toolbar />
      <Bookmarks />
      <EditorBar />
      <Canvas />
      <Taskbar />
    </div>
  );
}
